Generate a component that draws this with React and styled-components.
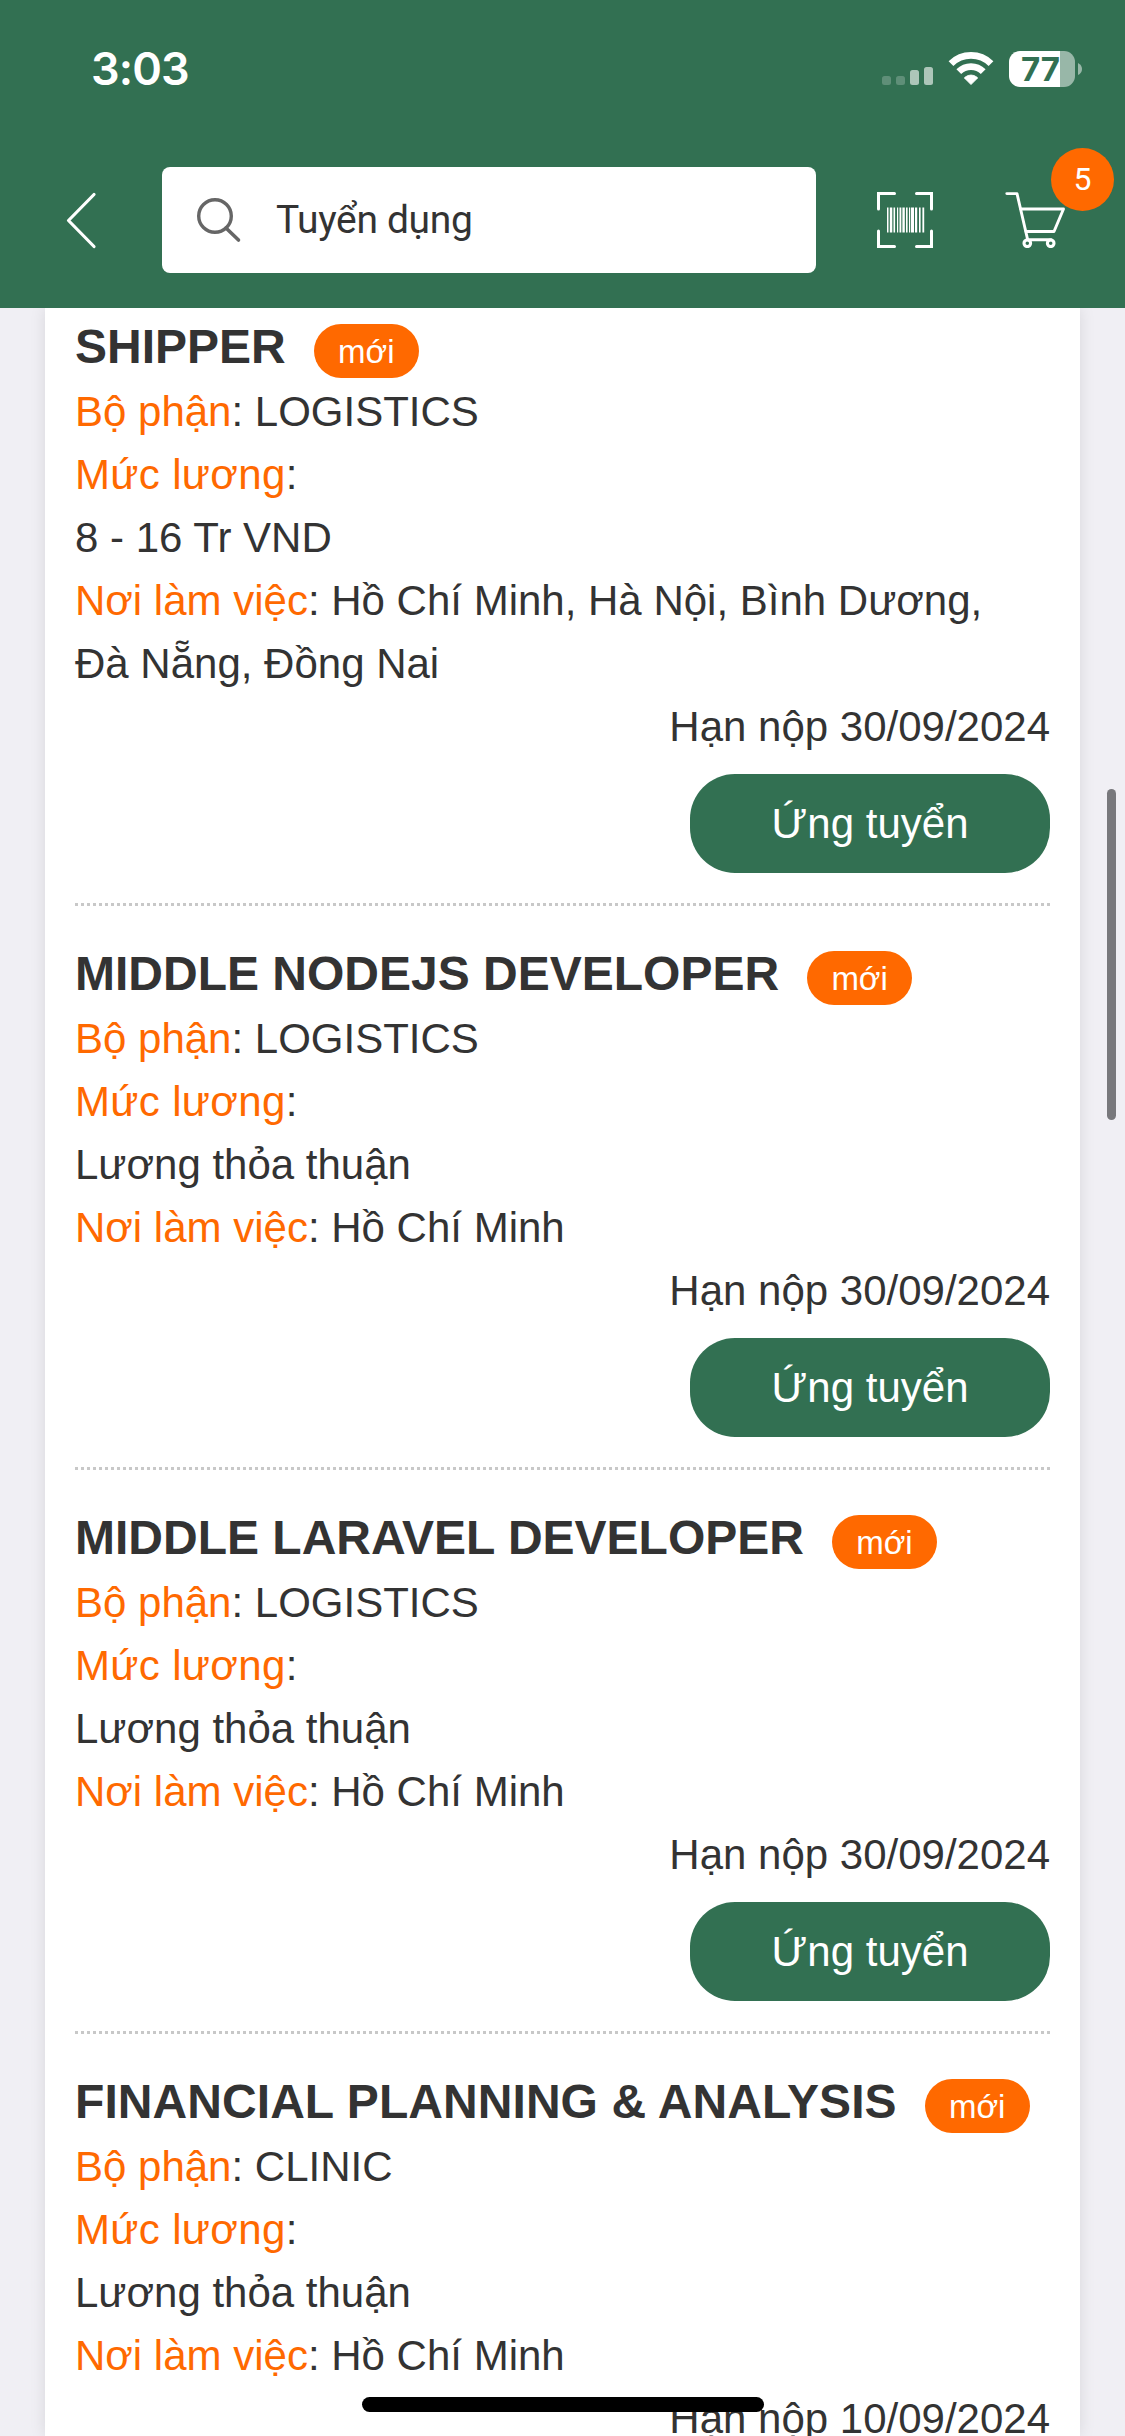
import React from "react";
import styled, { createGlobalStyle } from "styled-components";

const green = "#327052";
const orange = "#ff6900";
const ink = "#333333";

const GlobalStyle = createGlobalStyle`
  * { box-sizing: border-box; }
  body { margin: 0; background: #f0eff4; }
`;

const Screen = styled.div`
  position: relative;
  display: flex;
  flex-direction: column;
  width: 1125px;
  height: 2436px;
  overflow: hidden;
  background: #f0eff4;
  color: ${ink};
  font-family: "Liberation Sans", Arial, sans-serif;
  font-size: 42px;
  line-height: 63px;
`;

const Header = styled.header`
  position: relative;
  z-index: 1;
  flex: none;
  height: 308px;
  background: ${green};
`;

const StatusBar = styled.div`
  display: flex;
  align-items: center;
  height: 138px;
  padding: 0 43px 0 91px;
`;

const Clock = styled.span`
  flex: 1;
  font: 600 45px/56px Inter, sans-serif;
  letter-spacing: -0.9px;
  color: #fff;
`;

const StatusIcons = styled.div`
  display: flex;
  align-items: center;
  height: 36px;
`;

const WifiIcon = styled.svg`
  margin-left: 15px;
`;

const Battery = styled.div`
  display: flex;
  align-items: center;
  justify-content: center;
  width: 66px;
  height: 36px;
  margin-left: 15px;
  border-radius: 11px;
  background: linear-gradient(to right, #fff 51px, #98b7a8 51px);
  color: ${green};
  font: 700 33px/36px Inter, sans-serif;
  padding-right: 3px;
`;

const TipIcon = styled.svg`
  margin-left: 3px;
`;

const NavBar = styled.div`
  display: flex;
  align-items: center;
  height: 106px;
  margin-top: 29px;
  padding: 0 57px 0 63px;
`;

const SearchBox = styled.div`
  display: flex;
  flex: none;
  align-items: center;
  width: 654px;
  height: 106px;
  margin: 0 61px 0 63px;
  padding-left: 33px;
  border-radius: 8px;
  background: #fff;
`;

const SearchText = styled.span`
  margin-left: 34px;
  font: 400 39px/60px Roboto, sans-serif;
  letter-spacing: -0.35px;
`;

const CartButton = styled.div`
  position: relative;
  display: flex;
  flex: none;
  margin-left: 72px;
`;

const CartCount = styled.span`
  position: absolute;
  left: 46px;
  top: -44px;
  width: 63px;
  height: 63px;
  border-radius: 50%;
  background: ${orange};
  color: #fff;
  text-align: center;
  font: 400 32px/62px Roboto, sans-serif;
`;

const Card = styled.main`
  flex: 1;
  min-height: 0;
  margin: 0 45px;
  padding: 0 30px;
  background: #fff;
  box-shadow: 0 0 15px rgba(0, 0, 0, 0.1);
`;

const Job = styled.article`
  padding-top: ${(p) => (p.$first ? 1 : 30)}px;
`;

const TitleRow = styled.div`
  display: flex;
  align-items: flex-start;
  height: 71px;
`;

const Title = styled.h2`
  margin: 0;
  font-size: 48px;
  line-height: 76px;
  font-weight: 700;
  letter-spacing: ${(p) => p.$tracking || 0}px;
  white-space: nowrap;
`;

const NewTag = styled.span`
  width: 105px;
  height: 54px;
  margin: 15px 0 0 28px;
  border-radius: 27px;
  background: ${orange};
  color: #fff;
  text-align: center;
  font-size: 33px;
  line-height: 56px;
`;

const Line = styled.div`
  text-align: ${(p) => (p.$end ? "right" : "left")};
`;

const Label = styled.span`
  color: ${orange};
  letter-spacing: ${(p) => p.$tracking || 0}px;
`;

const ApplyButton = styled.button`
  display: block;
  width: 360px;
  height: 99px;
  margin: 16px 0 0 auto;
  padding: 0;
  border: 0;
  border-radius: 45px;
  background: ${green};
  color: #fff;
  font: inherit;
`;

const Divider = styled.div`
  height: 3px;
  margin-top: 30px;
  background: repeating-linear-gradient(to right, #c8c8c8 0 3px, #fff 3px 6px);
`;

const ScrollThumb = styled.div`
  position: absolute;
  right: 9px;
  top: 789px;
  width: 9px;
  height: 331px;
  border-radius: 5px;
  background: #78787c;
`;

const HomeIndicator = styled.div`
  position: absolute;
  left: 362px;
  top: 2397px;
  width: 402px;
  height: 15px;
  border-radius: 8px;
  background: #000;
`;

const Signal = () => (
  <svg width="51" height="36" viewBox="0 0 51 36" fill="#fff">
    <rect x="0" y="25" width="9" height="9" rx="2.5" opacity=".22" />
    <rect x="14" y="25" width="9" height="9" rx="2.5" opacity=".22" />
    <rect x="28" y="19" width="9" height="15" rx="2.5" opacity=".6" />
    <rect x="42" y="16" width="9" height="18" rx="2.5" opacity=".6" />
  </svg>
);

const Wifi = () => (
  <WifiIcon width="46" height="36" viewBox="0 0 46 36">
    <g fill="none" stroke="#fff" strokeWidth="6.8">
      <path d="M3 12.6A28.5 28.5 0 0 1 43 12.6" />
      <path d="M10.8 20.6A17.3 17.3 0 0 1 35.2 20.6" />
    </g>
    <path
      d="M23 33.6L16.6 27.2Q16.3 26.7 16.8 26.3Q23 21.7 29.2 26.3Q29.7 26.7 29.4 27.2Z"
      fill="#fff"
      stroke="#fff"
      strokeWidth="0.8"
      strokeLinejoin="round"
    />
  </WifiIcon>
);

const BatteryTip = () => (
  <TipIcon width="4" height="12" viewBox="0 0 4 12">
    <path d="M0 0Q4 2 4 6Q4 10 0 12Z" fill="#98b7a8" />
  </TipIcon>
);

const Back = () => (
  <svg width="36" height="60" viewBox="0 0 36 60" fill="none" stroke="#fff">
    <path
      d="M31 4.5L5.5 30.5L31 56.5"
      strokeWidth="3.2"
      strokeLinecap="round"
      strokeLinejoin="round"
    />
  </svg>
);

const Search = () => (
  <svg width="47" height="46" viewBox="0 0 47 46" fill="none" stroke="#666">
    <circle cx="20" cy="19" r="16.3" strokeWidth="3.4" />
    <path d="M31 31L43.5 43" strokeWidth="3.6" strokeLinecap="round" />
  </svg>
);

const BARS = [
  [10, 1.5], [12.8, 2.5], [16.5, 1.6], [20, 1.2], [22.5, 1.8], [25.4, 2.4],
  [29, 1.6], [32, 1.2], [34, 3], [38, 2.2], [42, 1.6], [45.4, 1.8],
];

const Scan = () => (
  <svg width="56" height="56" viewBox="0 0 56 56">
    <path
      d="M1.5 17V1.5H17.5M39.5 1.5H54.5V17M54.5 39V54.5H39.5M17.5 54.5H1.5V39"
      fill="none"
      stroke="#fff"
      strokeWidth="3"
      strokeLinecap="round"
    />
    {BARS.map(([x, w]) => (
      <rect key={x} x={x} y="15.5" width={w} height="25" fill="#fff" />
    ))}
  </svg>
);

const Cart = () => (
  <svg width="61" height="56" viewBox="0 0 61 56" fill="none" stroke="#fff">
    <g strokeWidth="2.9" strokeLinecap="round" strokeLinejoin="round">
      <path d="M1.8 1.6H12L22.5 47" />
      <path d="M15.8 17H58.5L49 39.5H21" />
      <path d="M22.5 47.8H46" />
    </g>
    <g strokeWidth="3.1">
      <circle cx="22.3" cy="51.3" r="3.3" />
      <circle cx="45.7" cy="51.3" r="3.3" />
    </g>
  </svg>
);

const jobs = [
  {
    title: "SHIPPER",
    dept: "LOGISTICS",
    pay: "8 - 16 Tr VND",
    place: "Hồ Chí Minh, Hà Nội, Bình Dương, Đà\u00a0Nẵng, Đồng Nai",
    due: "30/09/2024",
  },
  {
    title: "MIDDLE NODEJS DEVELOPER",
    dept: "LOGISTICS",
    pay: "Lương thỏa thuận",
    place: "Hồ Chí Minh",
    due: "30/09/2024",
  },
  {
    title: "MIDDLE LARAVEL DEVELOPER",
    dept: "LOGISTICS",
    pay: "Lương thỏa thuận",
    place: "Hồ Chí Minh",
    due: "30/09/2024",
  },
  {
    title: "FINANCIAL PLANNING & ANALYSIS",
    tracking: 0.07,
    dept: "CLINIC",
    pay: "Lương thỏa thuận",
    place: "Hồ Chí Minh",
    due: "10/09/2024",
    cut: true,
  },
];

export default function App() {
  return (
    <>
      <GlobalStyle />
      <Screen>
        <Header>
          <StatusBar>
            <Clock>3:03</Clock>
            <StatusIcons>
              <Signal />
              <Wifi />
              <Battery>77</Battery>
              <BatteryTip />
            </StatusIcons>
          </StatusBar>
          <NavBar>
            <Back />
            <SearchBox>
              <Search />
              <SearchText>Tuyển dụng</SearchText>
            </SearchBox>
            <Scan />
            <CartButton>
              <Cart />
              <CartCount>5</CartCount>
            </CartButton>
          </NavBar>
        </Header>
        <Card>
          {jobs.map((job, i) => (
            <Job key={job.title} $first={i === 0}>
              <TitleRow>
                <Title $tracking={job.tracking}>{job.title}</Title>
                <NewTag>mới</NewTag>
              </TitleRow>
              <Line>
                <Label>Bộ phận</Label>: {job.dept}
              </Line>
              <Line>
                <Label $tracking={0.35}>Mức lương</Label>:
              </Line>
              <Line>{job.pay}</Line>
              <Line>
                <Label>Nơi làm việc</Label>: {job.place}
              </Line>
              <Line $end>Hạn nộp {job.due}</Line>
              {!job.cut && (
                <>
                  <ApplyButton>Ứng tuyển</ApplyButton>
                  <Divider />
                </>
              )}
            </Job>
          ))}
        </Card>
        <ScrollThumb />
        <HomeIndicator />
      </Screen>
    </>
  );
}
